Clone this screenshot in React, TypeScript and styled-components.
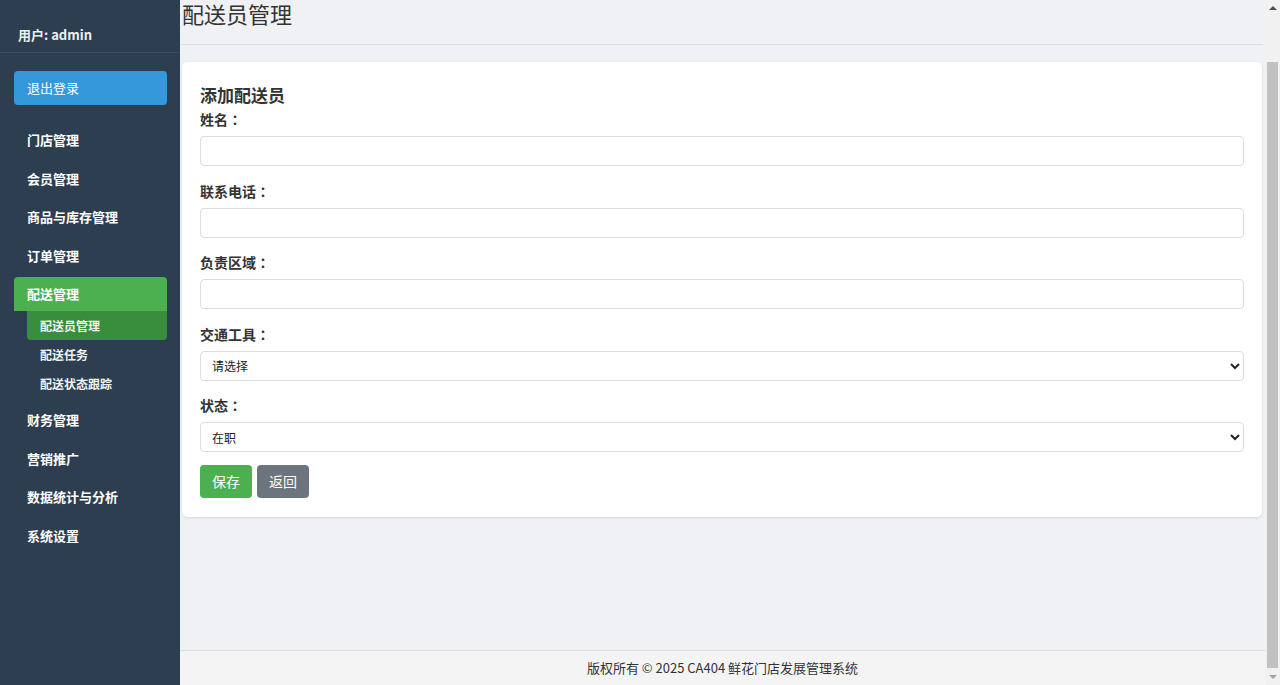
import React, { useLayoutEffect, useRef, useState } from "react";
import styled, { createGlobalStyle } from "styled-components";

const GlobalStyle = createGlobalStyle`
  html, body {
    margin: 0;
    padding: 0;
    background: #f0f1f4;
    font-family: "Noto Sans CJK SC", "Noto Sans", "Liberation Sans", sans-serif;
    color: #333;
    overflow: hidden;
  }
  * { box-sizing: border-box; }
`;

type MenuNode = {
    id: string,
    txt: string,
    active?: boolean,
    children?: { id: string, txt: string, active?: boolean }[]
}

const menuData: MenuNode[] = [
    { id: "store", txt: "门店管理" },
    { id: "member", txt: "会员管理" },
    { id: "goods", txt: "商品与库存管理" },
    { id: "order", txt: "订单管理" },
    {
        id: "delivery", txt: "配送管理", active: true,
        children: [
            { id: "courier", txt: "配送员管理", active: true },
            { id: "task", txt: "配送任务" },
            { id: "track", txt: "配送状态跟踪" }
        ]
    },
    { id: "finance", txt: "财务管理" },
    { id: "market", txt: "营销推广" },
    { id: "stats", txt: "数据统计与分析" },
    { id: "system", txt: "系统设置" }
]

const Layout = styled.div`
    display: flex;
    height: 100vh;
`

const Sidebar = styled.aside`
    flex: 0 0 180px;
    height: 100vh;
    background: #2c3e50;
    color: #ecf0f1;
    display: flex;
    flex-direction: column;
`

const UserBox = styled.div`
    height: 53px;
    padding: 25px 18px 0;
    font-size: 13px;
    font-weight: bold;
    line-height: 20px;
    border-bottom: 1px solid #3a4c5e;
`

const Nav = styled.nav`
    padding: 18px 13px 0 14px;
    display: flex;
    flex-direction: column;
`

const Logout = styled.button`
    height: 34px;
    width: 100%;
    border: none;
    border-radius: 4px;
    background: #3498db;
    color: #fff;
    text-align: left;
    padding: 0 13px 1px;
    font: 13px "Noto Sans CJK SC", sans-serif;
    margin-bottom: 18px;
    cursor: pointer;
`

const MenuItem = styled.div<{ $active?: boolean }>`
    height: 34px;
    line-height: 34px;
    padding: 0 13px;
    border-radius: ${p => p.$active ? "4px 4px 0 0" : "4px"};
    margin-bottom: ${p => p.$active ? "0" : "4.5px"};
    background: ${p => p.$active ? "#4caf50" : "transparent"};
    font-size: 13px;
    font-weight: bold;
    color: #fff;
`

const SubMenu = styled.div`
    margin: 0 0 5px 13px;
    display: flex;
    flex-direction: column;
`

const SubItem = styled.div<{ $active?: boolean }>`
    height: 29px;
    line-height: 29px;
    padding: 0 13px;
    font-size: 12px;
    font-weight: bold;
    color: #f2f2f2;
    background: ${p => p.$active ? "#388e3c" : "transparent"};
    border-radius: ${p => p.$active ? "0 0 4px 4px" : "0"};
`

const Main = styled.main`
    flex: 1;
    height: 100vh;
    overflow-y: scroll;
    scrollbar-width: none;
    &::-webkit-scrollbar { display: none; }
`

/* stand-in for the browser's classic vertical scrollbar */
const ScrollBar = styled.div`
    flex: 0 0 15px;
    height: 100vh;
    background: #f1f1f1;
    display: flex;
    flex-direction: column;
`

const Arrow = styled.div<{ $dir: "up" | "down" }>`
    flex: 0 0 17px;
    display: flex;
    justify-content: center;
    align-items: center;
    &::before {
        content: "";
        width: 0;
        height: 0;
        border-left: 4px solid transparent;
        border-right: 4px solid transparent;
        ${p => p.$dir == "up"
            ? "border-bottom: 4px solid #505050; margin-top: -1px;"
            : "border-top: 4px solid #a3a3a3; margin-top: 1px;"}
    }
`

const Track = styled.div`
    flex: 1;
    position: relative;
`

const Thumb = styled.div`
    position: absolute;
    left: 2px;
    right: 2px;
    background: #c1c1c1;
`

const Page = styled.div`
    min-height: 736px;
    display: flex;
    flex-direction: column;
`

const Content = styled.div`
    flex: 1;
    padding: 0 3px 0 2px;
`

const Header = styled.header`
    padding: 48px 0 14px 2px;
    border-bottom: 1px solid #dcdde0;
    margin: 0 -1px 0 -2px;
    h1 {
        margin: 0;
        font-size: 22px;
        font-weight: normal;
        line-height: 33px;
        color: #333;
    }
`

const Card = styled.section`
    margin-top: 17px;
    background: #fff;
    border-radius: 5px;
    box-shadow: 0 1px 3px rgba(0,0,0,0.1);
    padding: 21px 18px 19px;
    h2 {
        margin: 0 0 2px;
        font-size: 17px;
        line-height: 24px;
        font-weight: bold;
        color: #333;
    }
`

const FieldList = styled.div`
    display: flex;
    flex-direction: column;
    gap: 14.5px;
    margin-bottom: 12.5px;
`

const Field = styled.div`
    label {
        display: block;
        font-size: 14px;
        font-weight: bold;
        line-height: 20px;
        margin-bottom: 7px;
        color: #333;
    }
`

const Colon = styled.span`
    font-family: "Noto Sans CJK TC", "Noto Sans CJK SC", sans-serif;
`

const TextInput = styled.input`
    display: block;
    width: 100%;
    height: 30px;
    border: 1px solid #ddd;
    border-radius: 4px;
    padding: 0 10px;
    font: 12px "Noto Sans CJK SC", sans-serif;
    background: #fff;
`

const Select = styled.select`
    display: block;
    width: 100%;
    height: 30px;
    border: 1px solid #ddd;
    border-radius: 4px;
    padding: 0 7px;
    font: 12px "Noto Sans CJK SC", sans-serif;
    color: #222;
    background: #fff;
`

const Actions = styled.div`
    display: flex;
    gap: 5px;
`

const Btn = styled.button<{ $tone: "green" | "gray" }>`
    height: 33px;
    padding: 0 12px;
    border: none;
    border-radius: 4px;
    color: #fff;
    font: 14px "Noto Sans CJK SC", sans-serif;
    background: ${p => p.$tone == "green" ? "#4caf50" : "#6c757d"};
    cursor: pointer;
`

const Footer = styled.footer`
    height: 35px;
    line-height: 34px;
    text-align: center;
    background: #f4f4f5;
    border-top: 1px solid #dcdde0;
    font-size: 13px;
    color: #333;
`

const fields = [
    { id: "name", txt: "姓名", kind: "input" },
    { id: "phone", txt: "联系电话", kind: "input" },
    { id: "area", txt: "负责区域", kind: "input" },
    { id: "vehicle", txt: "交通工具", kind: "select", opts: ["请选择", "电动车", "摩托车", "汽车"] },
    { id: "state", txt: "状态", kind: "select", opts: ["在职", "离职"] }
]

export default () => {

    const mainRef = useRef<HTMLElement>(null)
    const [thumb, setThumb] = useState({ top: 0, height: 100 })

    useLayoutEffect(() => {
        const el = mainRef.current
        if (!el) return
        el.scrollTop = el.scrollHeight
        const sh = el.scrollHeight
        setThumb({
            top: el.scrollTop / sh * 100,
            height: el.clientHeight / sh * 100
        })
    }, [])

    return (
        <>
            <GlobalStyle />
            <Layout>
                <Sidebar>
                    <UserBox>用户: admin</UserBox>
                    <Nav>
                        <Logout>退出登录</Logout>
                        {
                            menuData.map((m: MenuNode) => (
                                <React.Fragment key={m.id}>
                                    <MenuItem $active={m.active}>{m.txt}</MenuItem>
                                    {m.children &&
                                        <SubMenu>
                                            {m.children.map(c => <SubItem key={c.id} $active={c.active}>{c.txt}</SubItem>)}
                                        </SubMenu>
                                    }
                                </React.Fragment>
                            ))
                        }
                    </Nav>
                </Sidebar>
                <Main ref={mainRef}>
                    <Page>
                        <Content>
                            <Header><h1>配送员管理</h1></Header>
                            <Card>
                                <h2>添加配送员</h2>
                                <FieldList>
                                    {
                                        fields.map(f => (
                                            <Field key={f.id}>
                                                <label htmlFor={f.id}>{f.txt}<Colon>：</Colon></label>
                                                {f.kind == "input" ?
                                                    <TextInput id={f.id} type="text" /> :
                                                    <Select id={f.id}>
                                                        {f.opts!.map(o => <option key={o}>{o}</option>)}
                                                    </Select>
                                                }
                                            </Field>
                                        ))
                                    }
                                </FieldList>
                                <Actions>
                                    <Btn $tone="green">保存</Btn>
                                    <Btn $tone="gray">返回</Btn>
                                </Actions>
                            </Card>
                        </Content>
                        <Footer>版权所有 © 2025 CA404 鲜花门店发展管理系统</Footer>
                    </Page>
                </Main>
                <ScrollBar>
                    <Arrow $dir="up" />
                    <Track>
                        <Thumb style={{ top: thumb.top + "%", height: thumb.height + "%" }} />
                    </Track>
                    <Arrow $dir="down" />
                </ScrollBar>
            </Layout>
        </>
    )
}
